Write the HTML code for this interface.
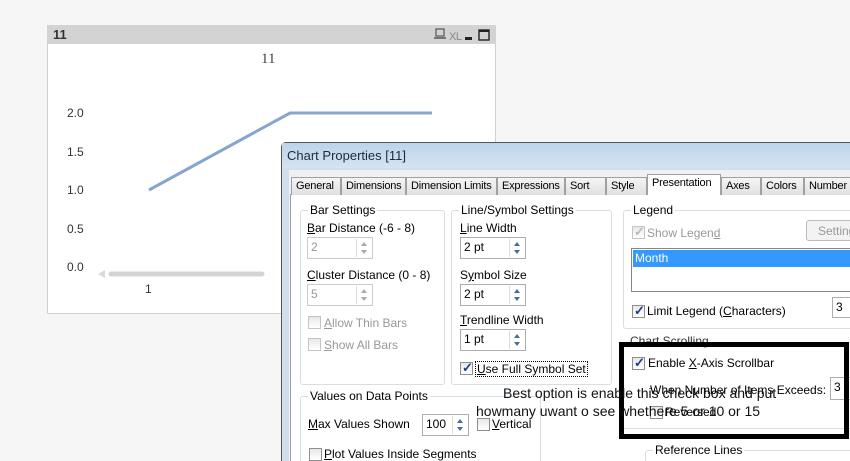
<!DOCTYPE html>
<html><head><meta charset="utf-8"><style>
*{margin:0;padding:0;box-sizing:border-box}
html,body{width:850px;height:461px;overflow:hidden}
body{background:#f6f6f6;position:relative;font-family:"Liberation Sans",sans-serif;font-size:12px;color:#000}
.a{position:absolute;white-space:nowrap}
.grp{position:absolute;border:1px solid #d5dfe5;border-radius:3px}
.gl{position:absolute;top:-8px;left:7px;background:#fff;padding:0 2px;font-size:12px;white-space:nowrap}
.inp{position:absolute;border:1px solid #abadb3;background:#fff;height:22px;padding:2px 3px;font-size:12px}
.inp.dis{color:#999;border-color:#ccc}
.spin{position:absolute;right:1px;top:1px;width:15px;height:18px;border-left:1px solid #ddd}
.spin:before,.spin:after{content:"";position:absolute;left:4px;border-left:3px solid transparent;border-right:3px solid transparent}
.spin:before{top:3px;border-bottom:4px solid #4a6a9a}
.spin:after{top:11px;border-top:4px solid #4a6a9a}
.dis .spin:before{border-bottom-color:#aaa}.dis .spin:after{border-top-color:#aaa}
.cb{position:absolute;width:13px;height:13px;border:1px solid #8f8f8f;background:linear-gradient(#e8e8e8,#fff)}
.cb.on:after{content:"✓";position:absolute;left:1px;top:-3px;font-size:13px;color:#1f3b8a;font-weight:bold}
.cb.dis{border-color:#c5c5c5}
.cb.dis.on:after{color:#bbb}
.tab{position:absolute;top:177px;height:18px;border:1px solid #a0a0a0;border-bottom:none;background:linear-gradient(#f5f5f5,#e0e0e0);padding:2px 4px;font-size:11px;white-space:nowrap;overflow:hidden;letter-spacing:-0.2px}
u{text-decoration:underline}
</style></head><body>
<div class="a" style="left:47px;top:25px;width:449px;height:289px;background:#fff;border:1px solid #d0d0d0"></div>
<div class="a" style="left:47px;top:25px;width:449px;height:19px;background:#d3d3d3"></div>
<div class="a" style="left:53px;top:27px;font-weight:bold;font-size:13px;color:#333">11</div>
<svg class="a" style="left:430px;top:27px" width="64" height="16"><rect x="6" y="2" width="8" height="7" fill="none" stroke="#555" stroke-width="1.2"/><line x1="4" y1="11" x2="16" y2="11" stroke="#555" stroke-width="1.5"/><text x="19" y="13" font-family="Liberation Sans" font-size="11" fill="#888" letter-spacing="-0.5">XL</text><rect x="35" y="10" width="7" height="3" fill="#222"/><rect x="49" y="3" width="10" height="10" fill="none" stroke="#222" stroke-width="1.4"/><line x1="49" y1="4" x2="59" y2="4" stroke="#222" stroke-width="2"/></svg>
<div class="a" style="left:261px;top:51px;font-family:'Liberation Serif',serif;font-size:15px;color:#444">11</div>
<div class="a" style="left:67px;top:106px;color:#333">2.0</div>
<div class="a" style="left:67px;top:145px;color:#333">1.5</div>
<div class="a" style="left:67px;top:183px;color:#333">1.0</div>
<div class="a" style="left:67px;top:222px;color:#333">0.5</div>
<div class="a" style="left:67px;top:260px;color:#333">0.0</div>
<svg class="a" style="left:0;top:0" width="500" height="320"><polyline points="149,190 290,113 432,113" fill="none" stroke="#88a6cc" stroke-width="3"/><line x1="111" y1="274" x2="262" y2="274" stroke="#d4d4d4" stroke-width="5" stroke-linecap="round"/><polygon points="98,274 105,270 105,278" fill="#d8d8d8"/></svg>
<div class="a" style="left:145px;top:282px;color:#333">1</div>
<div class="a" style="left:281px;top:142px;width:580px;height:330px;background:#cfdfee;border:1px solid #555;border-radius:5px 0 0 0"></div>
<div class="a" style="left:282px;top:143px;width:570px;height:25px;background:linear-gradient(#bcd3ea,#d5e4f3)"></div>
<div class="a" style="left:287px;top:148px;font-size:13px;color:#1e2a3a">Chart Properties [11]</div>
<div class="a" style="left:289px;top:170px;width:570px;height:300px;background:#f0f0f0"></div>
<div class="a" style="left:290px;top:194px;width:570px;height:280px;background:#fff;border:1px solid #a0a0a0"></div>
<div class="tab" style="left:291px;width:50px">General</div>
<div class="tab" style="left:341px;width:65px">Dimensions</div>
<div class="tab" style="left:406px;width:91px">Dimension Limits</div>
<div class="tab" style="left:497px;width:68px">Expressions</div>
<div class="tab" style="left:565px;width:41px">Sort</div>
<div class="tab" style="left:606px;width:41px">Style</div>
<div class="tab" style="left:647px;top:174px;height:21px;width:74px;background:#fff">Presentation</div>
<div class="tab" style="left:721px;width:40px">Axes</div>
<div class="tab" style="left:761px;width:43px">Colors</div>
<div class="tab" style="left:804px;width:50px">Number</div>
<div class="grp" style="left:300px;top:210px;width:145px;height:175px"><span class="gl">Bar Settings</span></div>
<div class="a" style="left:307px;top:221px"><u>B</u>ar Distance (-6 - 8)</div>
<div class="inp dis" style="left:307px;top:237px;width:66px">2<div class="spin"></div></div>
<div class="a" style="left:307px;top:268px"><u>C</u>luster Distance (0 - 8)</div>
<div class="inp dis" style="left:307px;top:284px;width:66px">5<div class="spin"></div></div>
<div class="cb dis" style="left:308px;top:316px"></div><div class="a" style="left:324px;top:316px;color:#999"><u>A</u>llow Thin Bars</div>
<div class="cb dis" style="left:308px;top:338px"></div><div class="a" style="left:324px;top:338px;color:#999"><u>S</u>how All Bars</div>
<div class="grp" style="left:451px;top:210px;width:161px;height:175px"><span class="gl">Line/Symbol Settings</span></div>
<div class="a" style="left:460px;top:221px"><u>L</u>ine Width</div>
<div class="inp" style="left:460px;top:237px;width:66px">2 pt<div class="spin"></div></div>
<div class="a" style="left:460px;top:268px">S<u>y</u>mbol Size</div>
<div class="inp" style="left:460px;top:284px;width:66px">2 pt<div class="spin"></div></div>
<div class="a" style="left:460px;top:313px"><u>T</u>rendline Width</div>
<div class="inp" style="left:460px;top:329px;width:66px">1 pt<div class="spin"></div></div>
<div class="cb on" style="left:460px;top:362px"></div><div class="a" style="left:475px;top:361px;border:1px dotted #000;padding:0 1px"><u>U</u>se Full Symbol Set</div>
<div class="grp" style="left:623px;top:210px;width:240px;height:119px"><span class="gl">Legend</span></div>
<div class="cb dis on" style="left:632px;top:226px"></div><div class="a" style="left:647px;top:226px;color:#999">Show Legen<u>d</u></div>
<div class="a" style="left:806px;top:220px;width:60px;height:21px;border:1px solid #bbb;border-radius:3px;background:#f3f3f3;color:#999;padding:3px 11px">Settings</div>
<div class="a" style="left:631px;top:248px;width:230px;height:44px;border:1px solid #828790;background:#fff"></div>
<div class="a" style="left:633px;top:250px;width:230px;height:17px;background:#3399ff;color:#fff;padding:1px 2px">Month</div>
<div class="cb on" style="left:632px;top:305px"></div><div class="a" style="left:647px;top:304px">Limit Legend (<u>C</u>haracters)</div>
<div class="inp" style="left:832px;top:297px;width:30px;height:21px">3</div>
<div class="a" style="left:630px;top:334px;color:#333">Chart Scrolling</div>
<div class="cb on" style="left:632px;top:357px"></div><div class="a" style="left:648px;top:356px">Enable <u>X</u>-Axis Scrollbar</div>
<div class="a" style="left:650px;top:383px">When Number of Items Exceeds:</div>
<div class="inp" style="left:830px;top:377px;width:30px;height:23px">3</div>
<div class="cb" style="left:650px;top:406px"></div><div class="a" style="left:665px;top:405px">Reversed</div>
<div class="a" style="left:623px;top:428px;width:240px;border-top:1px solid #d5dfe5"></div>
<div class="grp" style="left:645px;top:450px;width:220px;height:30px"><span class="gl">Reference Lines</span></div>
<div class="grp" style="left:300px;top:396px;width:241px;height:80px"><span class="gl">Values on Data Points</span></div>
<div class="a" style="left:308px;top:417px"><u>M</u>ax Values Shown</div>
<div class="inp" style="left:422px;top:414px;width:47px">100<div class="spin"></div></div>
<div class="cb" style="left:477px;top:418px"></div><div class="a" style="left:492px;top:417px"><u>V</u>ertical</div>
<div class="cb" style="left:309px;top:448px"></div><div class="a" style="left:324px;top:447px"><u>P</u>lot Values Inside Segments</div>
<div class="a" style="left:619px;top:342px;width:230px;height:97px;border:5px solid #000"></div>
<div class="a" style="left:503px;top:385px;font-size:14px;color:#111">Best option is enable this check box and put</div>
<div class="a" style="left:476px;top:403px;font-size:14px;color:#111">howmany uwant o see whethere 5 or 10 or 15</div>
</body></html>
